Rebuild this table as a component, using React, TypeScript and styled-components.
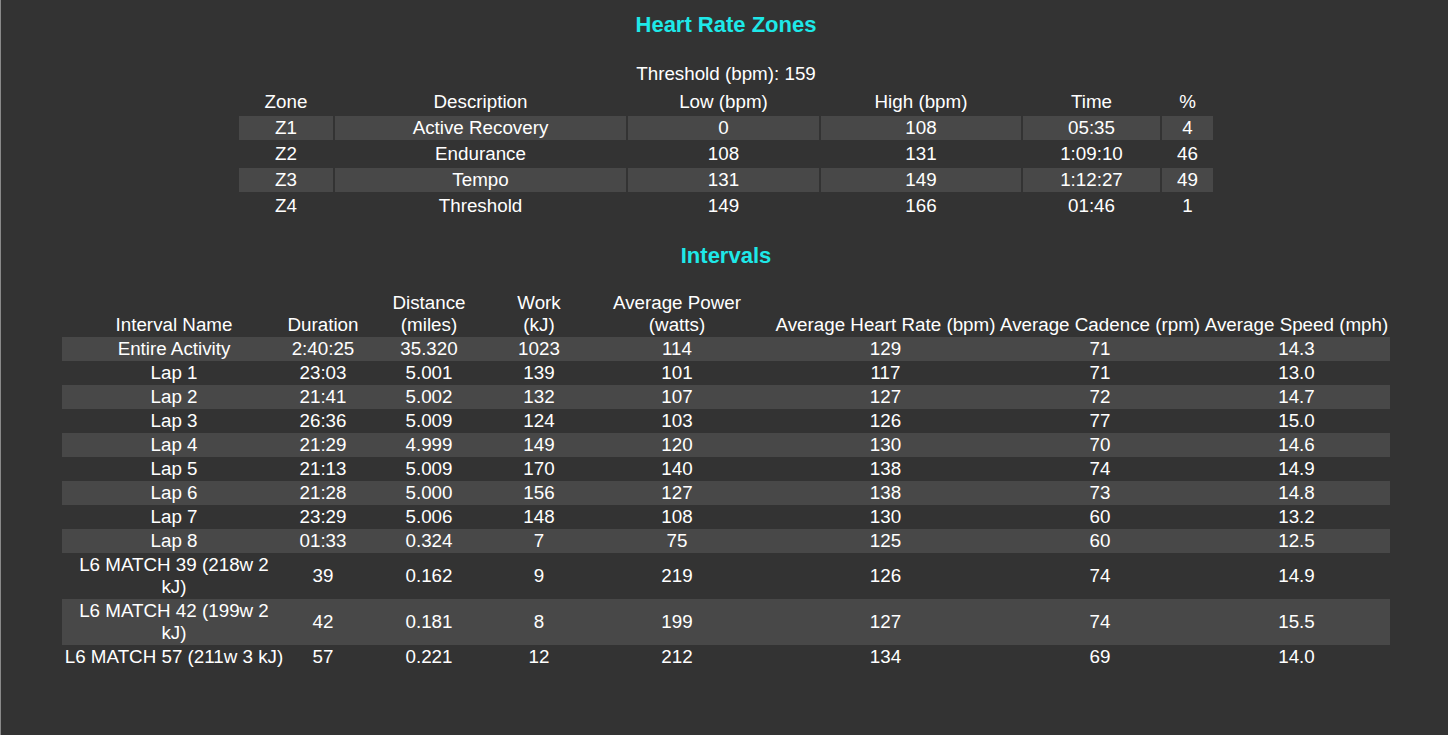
import styled, { createGlobalStyle } from 'styled-components';

const GlobalStyle = createGlobalStyle`
  html, body {
    margin: 0;
    padding: 0;
    background: #333333;
  }
`;

type Zone = {
  zone: string;
  description: string;
  low: number;
  high: number;
  time: string;
  percent: number;
};

type Interval = {
  name: string[];
  duration: string;
  distance: string;
  work: number;
  power: number;
  heartRate: number;
  cadence: number;
  speed: string;
};

const zones: Zone[] = [
  { zone: 'Z1', description: 'Active Recovery', low: 0, high: 108, time: '05:35', percent: 4 },
  { zone: 'Z2', description: 'Endurance', low: 108, high: 131, time: '1:09:10', percent: 46 },
  { zone: 'Z3', description: 'Tempo', low: 131, high: 149, time: '1:12:27', percent: 49 },
  { zone: 'Z4', description: 'Threshold', low: 149, high: 166, time: '01:46', percent: 1 },
];

const intervals: Interval[] = [
  { name: ['Entire Activity'], duration: '2:40:25', distance: '35.320', work: 1023, power: 114, heartRate: 129, cadence: 71, speed: '14.3' },
  { name: ['Lap 1'], duration: '23:03', distance: '5.001', work: 139, power: 101, heartRate: 117, cadence: 71, speed: '13.0' },
  { name: ['Lap 2'], duration: '21:41', distance: '5.002', work: 132, power: 107, heartRate: 127, cadence: 72, speed: '14.7' },
  { name: ['Lap 3'], duration: '26:36', distance: '5.009', work: 124, power: 103, heartRate: 126, cadence: 77, speed: '15.0' },
  { name: ['Lap 4'], duration: '21:29', distance: '4.999', work: 149, power: 120, heartRate: 130, cadence: 70, speed: '14.6' },
  { name: ['Lap 5'], duration: '21:13', distance: '5.009', work: 170, power: 140, heartRate: 138, cadence: 74, speed: '14.9' },
  { name: ['Lap 6'], duration: '21:28', distance: '5.000', work: 156, power: 127, heartRate: 138, cadence: 73, speed: '14.8' },
  { name: ['Lap 7'], duration: '23:29', distance: '5.006', work: 148, power: 108, heartRate: 130, cadence: 60, speed: '13.2' },
  { name: ['Lap 8'], duration: '01:33', distance: '0.324', work: 7, power: 75, heartRate: 125, cadence: 60, speed: '12.5' },
  { name: ['L6 MATCH 39 (218w 2', 'kJ)'], duration: '39', distance: '0.162', work: 9, power: 219, heartRate: 126, cadence: 74, speed: '14.9' },
  { name: ['L6 MATCH 42 (199w 2', 'kJ)'], duration: '42', distance: '0.181', work: 8, power: 199, heartRate: 127, cadence: 74, speed: '15.5' },
  { name: ['L6 MATCH 57 (211w 3 kJ)'], duration: '57', distance: '0.221', work: 12, power: 212, heartRate: 134, cadence: 69, speed: '14.0' },
];

const zoneCols = [94, 291, 191, 200, 137, 51];
const intervalCols = [224, 74, 138, 82, 194, 223, 206, 187];

export default function App() {
  return (
    <>
      <GlobalStyle />
      <Page>
        <SectionTitle>Heart Rate Zones</SectionTitle>
        <Threshold>Threshold (bpm): 159</Threshold>
        <ZoneTable>
          <colgroup>
            {zoneCols.map((w, i) => (
              <col key={i} style={{ width: w }} />
            ))}
          </colgroup>
          <thead>
            <tr>
              <HeadCell>Zone</HeadCell>
              <HeadCell>Description</HeadCell>
              <HeadCell>Low (bpm)</HeadCell>
              <HeadCell>High (bpm)</HeadCell>
              <HeadCell>Time</HeadCell>
              <HeadCell>%</HeadCell>
            </tr>
          </thead>
          <tbody>
            {zones.map((z, i) => (
              <Row key={z.zone} $striped={i % 2 === 0}>
                <Cell>{z.zone}</Cell>
                <Cell>{z.description}</Cell>
                <Cell>{z.low}</Cell>
                <Cell>{z.high}</Cell>
                <Cell>{z.time}</Cell>
                <Cell>{z.percent}</Cell>
              </Row>
            ))}
          </tbody>
        </ZoneTable>

        <IntervalsTitle>Intervals</IntervalsTitle>
        <IntervalTable>
          <colgroup>
            {intervalCols.map((w, i) => (
              <col key={i} style={{ width: w }} />
            ))}
          </colgroup>
          <thead>
            <tr>
              <BottomHeadCell>Interval Name</BottomHeadCell>
              <BottomHeadCell>Duration</BottomHeadCell>
              <BottomHeadCell>
                Distance
                <br />
                (miles)
              </BottomHeadCell>
              <BottomHeadCell>
                Work
                <br />
                (kJ)
              </BottomHeadCell>
              <BottomHeadCell>
                Average Power
                <br />
                (watts)
              </BottomHeadCell>
              <BottomHeadCell>Average Heart Rate (bpm)</BottomHeadCell>
              <BottomHeadCell>Average Cadence (rpm)</BottomHeadCell>
              <BottomHeadCell>Average Speed (mph)</BottomHeadCell>
            </tr>
          </thead>
          <tbody>
            {intervals.map((r, i) => (
              <Row key={r.name.join(' ')} $striped={i % 2 === 0}>
                <NameCell>
                  {r.name.map((part, j) => (
                    <span key={j}>
                      {j > 0 && <br />}
                      {part}
                    </span>
                  ))}
                </NameCell>
                <Cell>{r.duration}</Cell>
                <Cell>{r.distance}</Cell>
                <Cell>{r.work}</Cell>
                <Cell>{r.power}</Cell>
                <Cell>{r.heartRate}</Cell>
                <Cell>{r.cadence}</Cell>
                <Cell>{r.speed}</Cell>
              </Row>
            ))}
          </tbody>
        </IntervalTable>
      </Page>
    </>
  );
}

const Page = styled.div`
  min-height: 100vh;
  box-sizing: border-box;
  border-left: 1px solid #8a8a8a;
  padding: 12px 0 0 3px;
  display: flex;
  flex-direction: column;
  align-items: center;
  background: #333333;
  color: #ffffff;
  font-family: 'Liberation Sans', Arial, sans-serif;
  font-size: 18.8px;
  line-height: 22px;
`;

const SectionTitle = styled.h3`
  margin: 0;
  font-size: 22px;
  line-height: 26px;
  font-weight: bold;
  color: #1ee8e8;
`;

const IntervalsTitle = styled(SectionTitle)`
  margin-top: 23px;
`;

const Threshold = styled.div`
  margin-top: 25px;
`;

const ZoneTable = styled.table`
  margin-top: 3px;
  table-layout: fixed;
  border-collapse: separate;
  border-spacing: 2px;
  width: 978px;
`;

const IntervalTable = styled.table`
  margin-top: 22px;
  table-layout: fixed;
  border-collapse: separate;
  border-spacing: 0;
  width: 1328px;
`;

const HeadCell = styled.th`
  padding: 1px;
  font-weight: normal;
  text-align: center;
  vertical-align: middle;
  white-space: nowrap;
`;

const BottomHeadCell = styled(HeadCell)`
  vertical-align: bottom;
  overflow: visible;
`;

const Row = styled.tr<{ $striped: boolean }>`
  & > td {
    background: ${(p) => (p.$striped ? '#484848' : 'transparent')};
  }
`;

const Cell = styled.td`
  padding: 1px;
  text-align: center;
  vertical-align: middle;
  white-space: nowrap;
`;

const NameCell = styled(Cell)`
  overflow: visible;
`;
